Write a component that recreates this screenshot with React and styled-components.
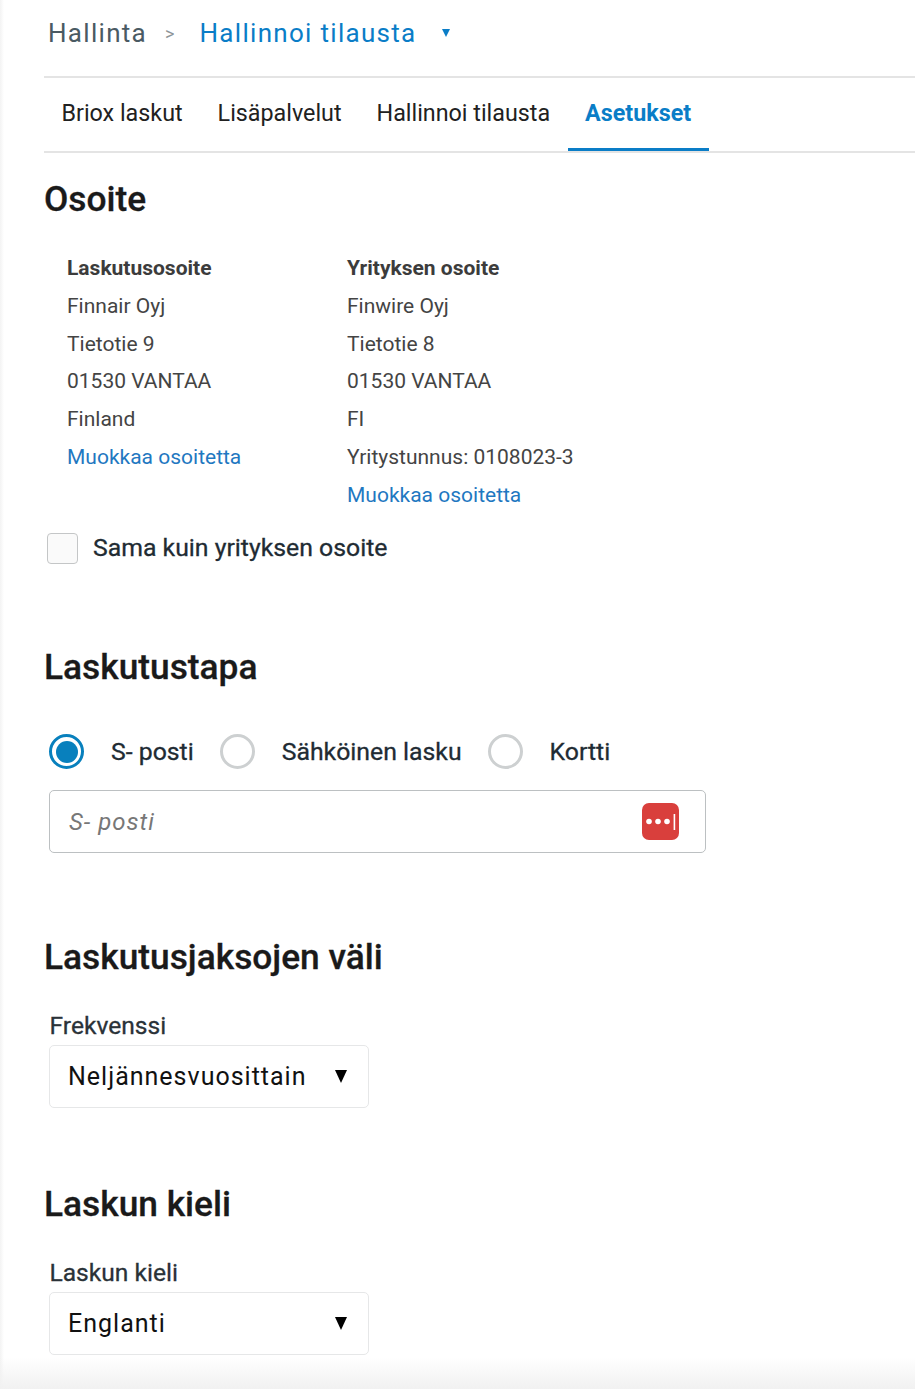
import React from "react";
import styled, { createGlobalStyle } from "styled-components";

const Global = createGlobalStyle`
  html, body { margin: 0; padding: 0; background: #fff; }
  body { font-family: Roboto, "Noto Sans", sans-serif; color: #212529; }
`;
const Page = styled.div`
  position: relative; width: 915px; height: 1389px; box-sizing: border-box; padding-left: 44px; overflow: hidden;
  background: linear-gradient(to right, #f3f3f3 0, #fff 4px);
  &::after { content: ""; position: absolute; left: 0; right: 0; bottom: 0; height: 32px;
    background: linear-gradient(to bottom, rgba(243,243,243,0), #f1f1f1); }
`;
const Crumbs = styled.nav`
  display: flex; align-items: center; padding: 0 0 10px 4px; box-sizing: border-box;
  font-size: 26px; letter-spacing: 1.3px; border-bottom: 2px solid #e4e4e4; height: 78px;
`;
const CrumbRoot = styled.span` color: #4a5a63; `;
const CrumbSep = styled.span` color: #8d9498; font-size: 18px; margin: 0 25px 0 18px; letter-spacing: 0; `;
const CrumbCurrent = styled.span` color: #0a7dc7; `;
const CrumbCaret = styled.span` width: 0; height: 0; margin: 0 0 0 25px; border: 4.5px solid transparent; border-top: 8px solid #0a7dc7; border-bottom: 0; `;
const Tabs = styled.div` display: flex; height: 75px; box-sizing: border-box; border-bottom: 2px solid #e4e4e4; `;
const Tab = styled.a`
  height: 73px; box-sizing: border-box; padding: 0 17.5px; display: flex; align-items: center; font-size: 23.3px; color: ${p => p.$active ? "#0a7dc7" : "#212121"};
  font-weight: ${p => p.$active ? 700 : 400}; border-bottom: 3px solid ${p => p.$active ? "#0a7dc7" : "transparent"};
`;
const Heading = styled.h2` margin: ${p => p.$top}px 0 0; font-size: 35.3px; line-height: 40px; font-weight: 500; color: #1a1a1a; -webkit-text-stroke: 0.3px #1a1a1a; `;
const Columns = styled.div` display: flex; padding: 31px 0 0 23px; `;
const Col = styled.div` width: 280px; font-size: 21px; line-height: 37.8px; color: #444; `;
const Strong = styled.div` font-weight: 700; color: #3c3c3c; `;
const Link = styled.a` display: block; color: #1f78c1; `;
const Line = styled.div``;
const CheckRow = styled.label` display: flex; align-items: center; gap: 15px; margin: 17px 0 0 3px; font-size: 24.8px; -webkit-text-stroke: 0.3px #212b33; color: #212b33; height: 32px; `;
const Check = styled.span` width: 31px; height: 31px; box-sizing: border-box; align-self: flex-end; border: 1px solid #c4c6c7; border-radius: 4px; background: #fafafa; `;
const Radios = styled.div` display: flex; align-items: center; margin: 47px 0 0 5px; height: 36px; `;
const Radio = styled.span`
  width: 35px; height: 35px; box-sizing: border-box; border-radius: 50%; flex: none;
  border: 3px solid ${p => p.$on ? "#0880bd" : "#cdd0d1"}; display: flex; align-items: center; justify-content: center;
  &::after { content: ""; width: 22px; height: 22px; border-radius: 50%; background: ${p => p.$on ? "#0880bd" : "transparent"}; }
`;
const RadioLabel = styled.span` font-size: 24.8px; -webkit-text-stroke: 0.3px #212b33; color: #212b33; margin: 0 26px 0 27px; `;
const Field = styled.div`
  width: 657px; height: 63px; box-sizing: border-box; margin: 20px 0 0 5px; padding: 0 26px 0 19px; border: 1px solid #bcc0c2; border-radius: 5px;
  display: flex; align-items: center; justify-content: space-between;
`;
const Placeholder = styled.span` font-size: 24px; font-style: italic; letter-spacing: 1px; color: #777; padding-top: 2px; `;
const Label = styled.div` margin: 34px 0 0 5.5px; font-size: 24.6px; -webkit-text-stroke: 0.3px #2a3238; line-height: 30px; color: #2a3238; `;
const Select = styled.div`
  width: 320px; height: 63px; box-sizing: border-box; margin: 4px 0 0 5px; padding: 1px 21px 0 18px; border: 1px solid #e6e7e8; border-radius: 5px;
  display: flex; align-items: center; justify-content: space-between; font-size: 25px; letter-spacing: 1px; color: #111;
`;
const Caret = styled.span` width: 0; height: 0; border: 6.5px solid transparent; border-top: 13px solid #000; border-bottom: 0; `;

const LastPass = () => (
  <svg width="37" height="37" viewBox="0 0 37 37">
    <rect width="37" height="37" rx="7" fill="#d93f3c" />
    <circle cx="7" cy="18.5" r="2.8" fill="#fff" />
    <circle cx="16" cy="18.5" r="2.8" fill="#fff" />
    <circle cx="25" cy="18.5" r="2.8" fill="#fff" />
    <rect x="31.6" y="11" width="1.6" height="16" fill="#fff" />
  </svg>
);

export default function App() {
  return (
    <Page>
      <Global />
      <Crumbs>
        <CrumbRoot>Hallinta</CrumbRoot>
        <CrumbSep>&gt;</CrumbSep>
        <CrumbCurrent>Hallinnoi tilausta</CrumbCurrent>
        <CrumbCaret />
      </Crumbs>
      <Tabs>
        <Tab>Briox laskut</Tab>
        <Tab>Lisäpalvelut</Tab>
        <Tab>Hallinnoi tilausta</Tab>
        <Tab $active>Asetukset</Tab>
      </Tabs>
      <Heading $top={26}>Osoite</Heading>
      <Columns>
        <Col>
          <Strong>Laskutusosoite</Strong>
          <Line>Finnair Oyj</Line>
          <Line>Tietotie 9</Line>
          <Line>01530 VANTAA</Line>
          <Line>Finland</Line>
          <Link>Muokkaa osoitetta</Link>
        </Col>
        <Col>
          <Strong>Yrityksen osoite</Strong>
          <Line>Finwire Oyj</Line>
          <Line>Tietotie 8</Line>
          <Line>01530 VANTAA</Line>
          <Line>FI</Line>
          <Line>Yritystunnus: 0108023-3</Line>
          <Link>Muokkaa osoitetta</Link>
        </Col>
      </Columns>
      <CheckRow><Check />Sama kuin yrityksen osoite</CheckRow>
      <Heading $top={83}>Laskutustapa</Heading>
      <Radios>
        <Radio $on /><RadioLabel>S- posti</RadioLabel>
        <Radio /><RadioLabel>Sähköinen lasku</RadioLabel>
        <Radio /><RadioLabel>Kortti</RadioLabel>
      </Radios>
      <Field><Placeholder>S- posti</Placeholder><LastPass /></Field>
      <Heading $top={84}>Laskutusjaksojen väli</Heading>
      <Label>Frekvenssi</Label>
      <Select>Neljännesvuosittain<Caret /></Select>
      <Heading $top={76}>Laskun kieli</Heading>
      <Label>Laskun kieli</Label>
      <Select>Englanti<Caret /></Select>
    </Page>
  );
}
